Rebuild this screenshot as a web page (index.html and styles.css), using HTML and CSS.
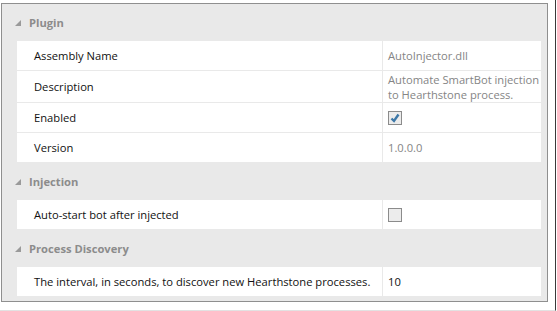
FILE: index.html
```html
<!DOCTYPE html>
<html lang="en">
<head>
  <meta charset="UTF-8" />
  <title>Plugin Settings</title>
  <link rel="stylesheet" href="styles.css">
</head>
<body>
  <div class="frame">
    <div class="grid">

      <!-- Plugin -->
      <div class="group-head">
        <svg class="caret" width="6" height="6" viewBox="0 0 6 6"><polygon points="6,0 6,6 0,6" /></svg>
        <span>Plugin</span>
      </div>
      <div class="row">
        <div class="label">Assembly Name</div>
        <div class="value muted">AutoInjector.dll</div>
      </div>
      <div class="row tall">
        <div class="label">Description</div>
        <div class="value muted">Automate SmartBot injection<br>to Hearthstone process.</div>
      </div>
      <div class="row">
        <div class="label">Enabled</div>
        <div class="value">
          <span class="check on">
            <svg width="12" height="12" viewBox="0 0 12 12"><path d="M2.5 6.5 L5 9 L9.5 2.5" /></svg>
          </span>
        </div>
      </div>
      <div class="row">
        <div class="label">Version</div>
        <div class="value muted">1.0.0.0</div>
      </div>

      <!-- Injection -->
      <div class="group-head">
        <svg class="caret" width="6" height="6" viewBox="0 0 6 6"><polygon points="6,0 6,6 0,6" /></svg>
        <span>Injection</span>
      </div>
      <div class="row">
        <div class="label">Auto-start bot after injected</div>
        <div class="value"><span class="check"></span></div>
      </div>

      <!-- Process Discovery -->
      <div class="group-head">
        <svg class="caret" width="6" height="6" viewBox="0 0 6 6"><polygon points="6,0 6,6 0,6" /></svg>
        <span>Process Discovery</span>
      </div>
      <div class="row">
        <div class="label">The interval, in seconds, to discover new Hearthstone processes.</div>
        <div class="value">10</div>
      </div>

    </div>
  </div>
</body>
</html>
```

FILE: styles.css
```css
* {
  box-sizing: border-box;
}
body {
  margin: 0;
  background: #fff;
  font-family: 'Open Sans', 'Noto Sans', sans-serif;
  font-size: 11.2px;
  color: #111;
}
.frame {
  width: 556px;
  height: 311px;
  border-right: 1px solid #3a3a3a;
  border-bottom: 1px solid #e2e2e2;
  padding: 3px 0 0 1px;
}
.grid {
  width: 547px;
  border: 1px solid #8f8f8f;
  background: #e9e9e9;
  padding: 0 6px 4px 15px;
}

/* Group headers */
.group-head {
  height: 37px;
  margin-left: -15px;
  padding-left: 13px;
  display: flex;
  align-items: center;
  gap: 8px;
  font-weight: 700;
  color: #8c8c8c;
}
.caret {
  fill: #9a9a9a;
  flex: none;
}

/* Property rows */
.row {
  display: grid;
  grid-template-columns: 365px 1fr;
  column-gap: 1px;
  height: 29px;
  margin-bottom: 1px;
}
.row.tall {
  height: 31px;
}
.label, .value {
  background: #fff;
  display: flex;
  align-items: center;
  line-height: 16px;
  white-space: nowrap;
}
.value.muted {
  line-height: 15px;
}
.label {
  padding-left: 17px;
}
.value {
  padding-left: 5px;
}
.muted {
  color: #858585;
}

/* Checkboxes */
.check {
  width: 14px;
  height: 14px;
  border: 1px solid #8b8b8b;
  background: #ececec;
  display: flex;
  align-items: center;
  justify-content: center;
}
.check svg {
  fill: none;
  stroke: #3d78a8;
  stroke-width: 2.4;
}
```
